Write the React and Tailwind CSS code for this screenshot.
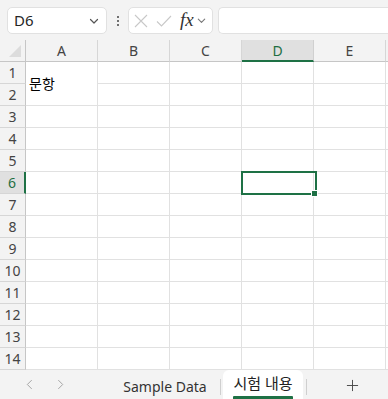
import { useState } from 'react';

const cols = ['A', 'B', 'C', 'D', 'E'];
const rows = Array.from({ length: 14 }, (_, i) => i + 1);

const Chevron = (props) => (
  <svg viewBox="0 0 12 12" fill="none" stroke="currentColor" strokeWidth={1.2} {...props}>
    <path d="M2.5 4.5 6 8l3.5-3.5" strokeLinecap="round" strokeLinejoin="round" />
  </svg>
);

export default function App() {
  const [active] = useState({ col: 'D', row: 6 });

  return (
    <div
      className="w-[388px] h-[399px] overflow-hidden bg-white flex flex-col text-[#262626]"
      style={{ fontFamily: '"Noto Sans", "Noto Sans CJK KR", sans-serif' }}
    >
      {/* formula bar */}
      <div className="h-[40px] shrink-0 bg-[#f3f3f3] flex items-center pl-[7px] pt-[1px]">
        <div className="w-[100px] h-[27px] bg-white border border-[#e1e1e1] rounded-[5px] flex items-center justify-between pl-[6px] pr-[6px]">
          <span className="text-[15px] leading-none">D6</span>
          <Chevron className="w-[12px] h-[12px] text-[#555]" />
        </div>
        <div className="w-[21px] flex flex-col items-center gap-[2px]">
          <span className="w-[2px] h-[2px] bg-[#444] rounded-full" />
          <span className="w-[2px] h-[2px] bg-[#444] rounded-full" />
          <span className="w-[2px] h-[2px] bg-[#444] rounded-full" />
        </div>
        <div className="w-[85px] h-[27px] bg-white border border-[#e1e1e1] rounded-[5px] flex items-center pl-[5px] gap-[8px]">
          <svg viewBox="0 0 14 14" className="w-[14px] h-[14px]" fill="none" stroke="#c8c8c8" strokeWidth={1.1}>
            <path d="M1 1l12 12M13 1 1 13" />
          </svg>
          <svg viewBox="0 0 16 14" className="w-[16px] h-[14px]" fill="none" stroke="#c8c8c8" strokeWidth={1.1}>
            <path d="M1 7.5 5.5 12 15 2" />
          </svg>
          <div className="flex items-center gap-[2px]">
            <span
              className="text-[19px] italic leading-none text-[#333] -mt-[2px]"
              style={{ fontFamily: '"Liberation Serif", serif' }}
            >
              fx
            </span>
            <Chevron className="w-[11px] h-[11px] text-[#777]" />
          </div>
        </div>
        <div className="flex-1 ml-[5px] h-[27px] bg-white border border-[#e1e1e1] border-r-0 rounded-l-[5px]" />
      </div>

      {/* grid */}
      <div className="relative flex-1 overflow-hidden">
        <div className="grid grid-cols-[26px_repeat(5,72px)_1fr] grid-rows-[22px_repeat(14,22px)]">
          <div className="bg-[#f3f3f3] border-r border-b border-[#c6c6c6] relative">
            <svg viewBox="0 0 10 10" className="absolute right-[4px] bottom-[4px] w-[12px] h-[12px]">
              <path d="M10 0v10H0z" fill="#dcdcdc" />
            </svg>
          </div>
          {cols.map((c) => (
            <div
              key={c}
              className={
                c === active.col
                  ? 'bg-[#e0e0e0] border-r border-[#d0d0d0] border-b-2 border-b-[#1e7145] flex items-center justify-center text-[14px] text-[#1e6e42]'
                  : 'bg-[#f3f3f3] border-r border-b border-[#d6d6d6] border-b-[#c6c6c6] flex items-center justify-center text-[14px] text-[#444]'
              }
            >
              {c}
            </div>
          ))}
          <div className="bg-[#f3f3f3] border-b border-[#c6c6c6]" />

          {rows.map((r) => (
            <div key={r} className="contents">
              <div
                className={
                  r === active.row
                    ? 'bg-[#e0e0e0] border-r-2 border-[#1e7145] border-b border-b-[#d6d6d6] flex items-center justify-center text-[14px] text-[#1e6e42]'
                    : 'bg-[#f3f3f3] border-r border-[#c6c6c6] border-b border-b-[#d6d6d6] flex items-center justify-center text-[14px] text-[#444]'
                }
              >
                {r}
              </div>
              {r === 1 && (
                <div className="row-span-2 border-r border-b border-[#e1e1e1] flex items-center pl-[3px] text-[14px] text-black">
                  문항
                </div>
              )}
              {cols.slice(r <= 2 ? 1 : 0).map((c) => (
                <div key={c} className="border-r border-b border-[#e1e1e1]" />
              ))}
              <div className="border-b border-[#e1e1e1]" />
            </div>
          ))}
        </div>

        {/* selection */}
        <div className="absolute left-[241px] top-[131px] w-[76px] h-[24px] border-2 border-[#1e7145] pointer-events-none" />
        <div className="absolute left-[311px] top-[150px] w-[7px] h-[7px] bg-[#1e7145] border border-white" />
      </div>

      {/* sheet tabs */}
      <div className="h-[29px] shrink-0 bg-[#f3f3f3] flex items-end text-[14px]">
        <div className="w-[110px] h-full flex items-center pl-[26px] gap-[24px] text-[#999]">
          <svg viewBox="0 0 8 12" className="w-[7px] h-[11px]" fill="none" stroke="currentColor" strokeWidth={1}>
            <path d="M6.5 1 1.5 6l5 5" />
          </svg>
          <svg viewBox="0 0 8 12" className="w-[7px] h-[11px]" fill="none" stroke="currentColor" strokeWidth={1}>
            <path d="M1.5 1l5 5-5 5" />
          </svg>
        </div>
        <div className="w-[110px] h-full flex items-center justify-center pt-[3px] text-[#333]">
          Sample Data
        </div>
        <div className="w-px h-[16px] bg-[#cfcfcf] self-center mt-[4px]" />
        <div className="ml-[2px] w-[80px] h-full bg-white rounded-t-[6px] flex flex-col items-center justify-end">
          <span className="text-[15px] leading-none text-[#222] mb-[5px]">시험 내용</span>
          <span className="w-[60px] h-[3px] bg-[#1e7145] rounded-t-[1px]" />
        </div>
        <div className="w-px h-[16px] bg-[#cfcfcf] self-center mt-[4px] ml-[3px]" />
        <div className="flex-1 h-full flex items-center justify-center pt-[2px] pl-[10px]">
          <svg viewBox="0 0 14 14" className="w-[13px] h-[13px]" fill="none" stroke="#444" strokeWidth={1}>
            <path d="M7 1v12M1 7h12" />
          </svg>
        </div>
      </div>
    </div>
  );
}
